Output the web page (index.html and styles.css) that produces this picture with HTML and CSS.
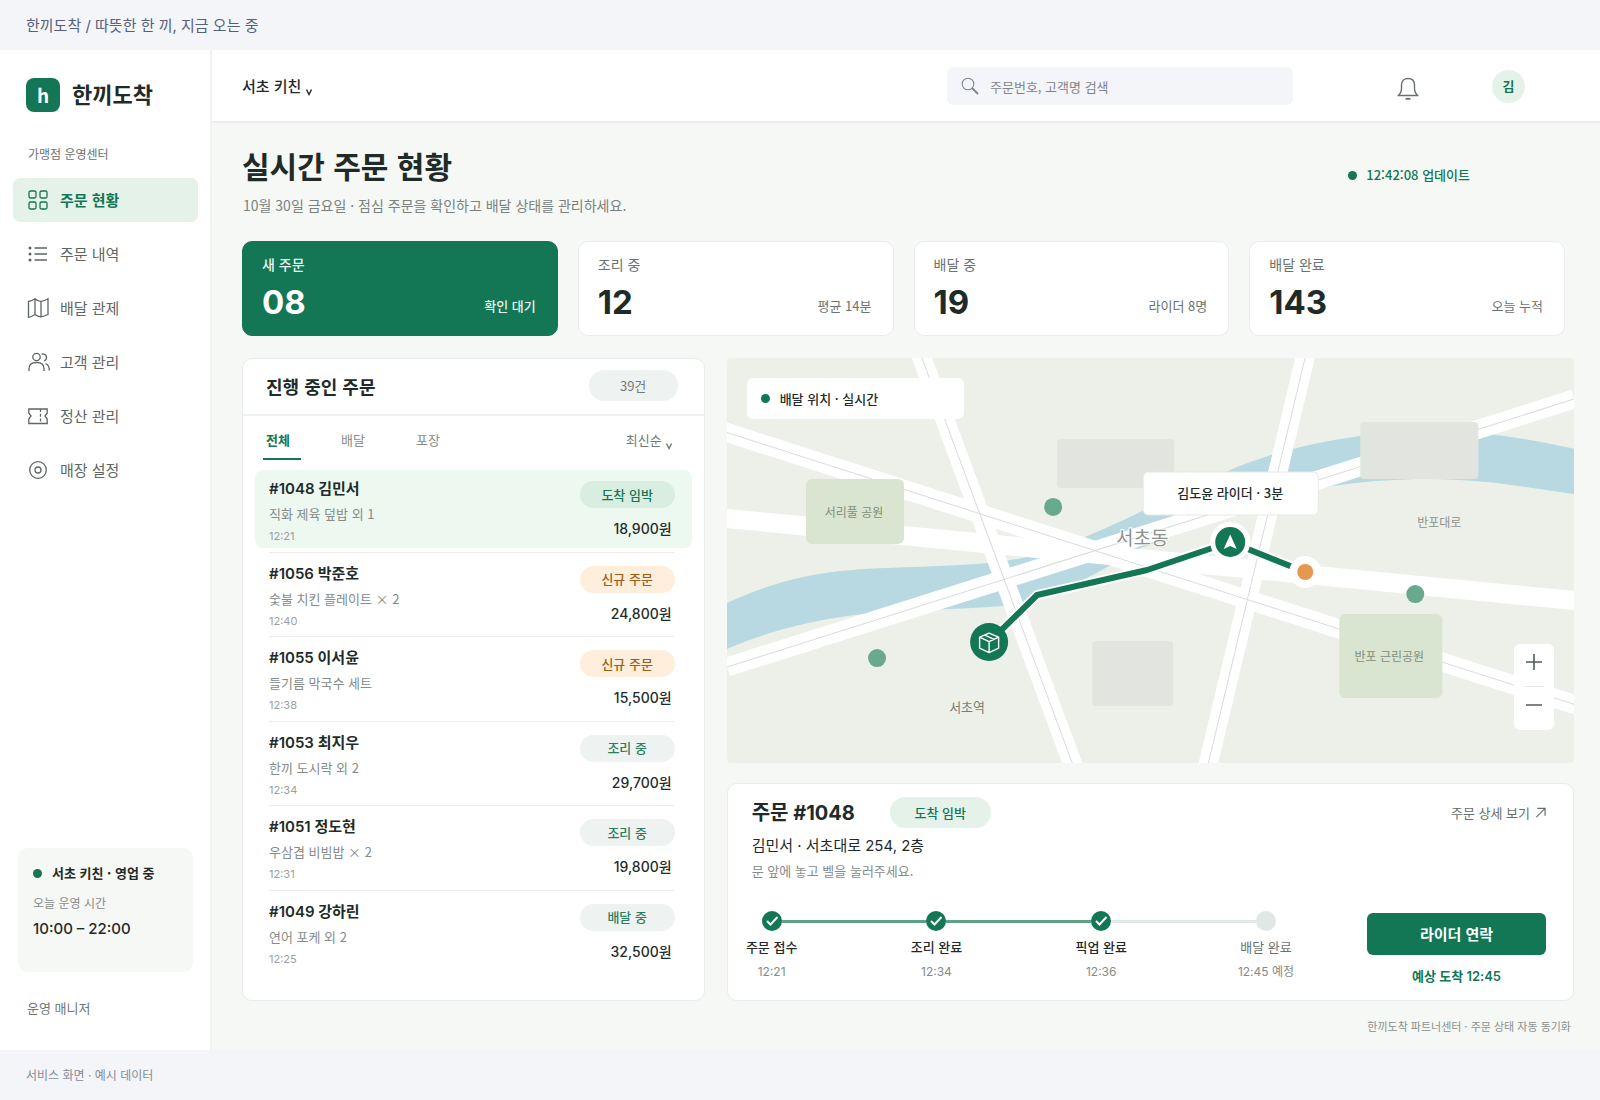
FILE: index.html
```html
<!DOCTYPE html>
<html lang="ko">
<head>
<meta charset="utf-8">
<meta name="viewport" content="width=device-width, initial-scale=1">
<title>한끼도착</title>
<link rel="stylesheet" href="styles.css">
</head>
<body>
<div class="strip strip-top">한끼도착 / 따뜻한 한 끼, 지금 오는 중</div>
<div class="shell">
  <aside class="sidebar">
    <div class="brand"><span class="brand-mark">h</span><span class="brand-name">한끼도착</span></div>
    <p class="side-label">가맹점 운영센터</p>
    <nav class="nav">
      <a class="nav-item is-active" href="#">
        <svg class="icon" viewBox="0 0 20 20"><rect x="1" y="1" width="7" height="7" rx="1.5"/><rect x="12" y="1" width="7" height="7" rx="1.5"/><rect x="1" y="12" width="7" height="7" rx="1.5"/><rect x="12" y="12" width="7" height="7" rx="1.5"/></svg>주문 현황</a>
      <a class="nav-item" href="#">
        <svg class="icon" viewBox="0 0 20 20"><path d="M6.500 4H19M6.500 10H19M6.500 16H19"/><g fill="currentColor" stroke="none"><circle cx="2" cy="4" r="1.500"/><circle cx="2" cy="10" r="1.500"/><circle cx="2" cy="16" r="1.500"/></g></svg>주문 내역</a>
      <a class="nav-item" href="#">
        <svg class="icon" viewBox="0 0 20 20"><path d="M0.500 3.500Q4 3 7 0.800Q10 3.500 13 3.300Q16.500 3 20 0.800V16.500Q16 18.500 13 18.800Q10 19 7 16.500Q4 18.500 0.500 19.500ZM7 0.800V16.500M13 3.300V18.800"/></svg>배달 관제</a>
      <a class="nav-item" href="#">
        <svg class="icon icon-wide" viewBox="0 0 22 20"><circle cx="8.500" cy="5" r="3.700"/><path d="M1 19V16.500C1 12.500 4 10.500 8.500 10.500S16 12.500 16 16.500V19M13.500 1.800C16 1.800 18.500 3 18.500 5.500C18.500 7.500 17.500 8.500 16 9M17.500 11.500C20 12.500 21.300 15 21.300 18.500"/></svg>고객 관리</a>
      <a class="nav-item" href="#">
        <svg class="icon" viewBox="0 0 20 20"><path d="M0.800 3H19.200V7L17 10L19.200 13V17.500H0.800V13L3 10L0.800 7Z"/><path d="M12.500 3V17.500" stroke-dasharray="3 1.800"/></svg>정산 관리</a>
      <a class="nav-item" href="#">
        <svg class="icon" viewBox="0 0 20 20"><circle cx="10" cy="10" r="8.300"/><circle cx="10" cy="10" r="3"/></svg>매장 설정</a>
    </nav>
    <section class="store">
      <h2 class="store-name"><span class="dot"></span>서초 키친 · 영업 중</h2>
      <p class="store-label">오늘 운영 시간</p>
      <p class="store-hours">10:00 – 22:00</p>
    </section>
    <p class="role">운영 매니저</p>
  </aside>

  <div class="main">
    <header class="topbar">
      <button class="branch" type="button">서초 키친<svg class="caret" viewBox="0 0 8 8"><path d="M1.500 1.500L4 6.500L6.500 1.500"/></svg></button>
      <label class="search">
        <svg class="search-icon" viewBox="0 0 18 18"><circle cx="7" cy="7" r="5.800"/><path d="M11 11L17 17" stroke-width="1.800"/></svg>
        <input type="search" placeholder="주문번호, 고객명 검색" aria-label="주문 검색">
      </label>
      <button class="bell" type="button" aria-label="알림"><svg viewBox="0 0 22 24"><path d="M1.500 18.500C3.500 16.500 4.500 15 4.500 12V8C4.500 4 7 1.500 11 1.500S17.500 4 17.500 8V12C17.500 15 18.500 16.500 20.500 18.500Z"/><path d="M8.500 21.800H13.500" stroke-width="1.800"/></svg></button>
      <button class="avatar" type="button">김</button>
    </header>

    <main class="content">
      <div class="page-head">
        <div>
          <h1>실시간 주문 현황</h1>
          <p class="page-sub">10월 30일 금요일 · 점심 주문을 확인하고 배달 상태를 관리하세요.</p>
        </div>
        <p class="updated"><span class="dot"></span>12:42:08 업데이트</p>
      </div>

      <section class="stats">
        <article class="stat is-primary"><h2>새 주문</h2><div class="stat-row"><strong>08</strong><span>확인 대기</span></div></article>
        <article class="stat"><h2>조리 중</h2><div class="stat-row"><strong>12</strong><span>평균 14분</span></div></article>
        <article class="stat"><h2>배달 중</h2><div class="stat-row"><strong>19</strong><span>라이더 8명</span></div></article>
        <article class="stat"><h2>배달 완료</h2><div class="stat-row"><strong>143</strong><span>오늘 누적</span></div></article>
      </section>

      <div class="board">
        <section class="card orders">
          <div class="orders-head"><h2>진행 중인 주문</h2><span class="pill pill-count">39건</span></div>
          <div class="tabs">
            <button class="tab is-active" type="button">전체</button>
            <button class="tab" type="button">배달</button>
            <button class="tab" type="button">포장</button>
            <button class="sort" type="button">최신순<svg class="caret" viewBox="0 0 8 8"><path d="M1.500 1.500L4 6.500L6.500 1.500"/></svg></button>
          </div>
          <ul class="order-list">
            <li><div class="order is-selected"><div class="order-info"><h3>#1048 김민서</h3><p>직화 제육 덮밥 외 1</p><time>12:21</time></div><div class="order-side"><span class="pill pill-arriving">도착 임박</span><strong>18,900원</strong></div></div></li>
            <li><div class="order"><div class="order-info"><h3>#1056 박준호</h3><p>숯불 치킨 플레이트 × 2</p><time>12:40</time></div><div class="order-side"><span class="pill pill-new">신규 주문</span><strong>24,800원</strong></div></div></li>
            <li><div class="order"><div class="order-info"><h3>#1055 이서윤</h3><p>들기름 막국수 세트</p><time>12:38</time></div><div class="order-side"><span class="pill pill-new">신규 주문</span><strong>15,500원</strong></div></div></li>
            <li><div class="order"><div class="order-info"><h3>#1053 최지우</h3><p>한끼 도시락 외 2</p><time>12:34</time></div><div class="order-side"><span class="pill">조리 중</span><strong>29,700원</strong></div></div></li>
            <li><div class="order"><div class="order-info"><h3>#1051 정도현</h3><p>우삼겹 비빔밥 × 2</p><time>12:31</time></div><div class="order-side"><span class="pill">조리 중</span><strong>19,800원</strong></div></div></li>
            <li><div class="order"><div class="order-info"><h3>#1049 강하린</h3><p>연어 포케 외 2</p><time>12:25</time></div><div class="order-side"><span class="pill">배달 중</span><strong>32,500원</strong></div></div></li>
          </ul>
        </section>

        <div class="right">
          <section class="map">
            <svg class="map-canvas" viewBox="0 0 847 405" preserveAspectRatio="xMidYMid slice">
              <path class="river" d="M0 245C50 222 93 212 160 210C210 208 260 208 300 199C370 180 430 143 503 112C560 88 620 77 690 73C740 71 800 80 847 91V136C800 130 760 121 700 121C640 121 590 130 545 138C490 152 450 180 413 190C370 215 330 240 276 248C230 252 180 251 136 256C90 261 40 273 0 291Z"/>
              <g class="road"><path d="M0 309L847 41"/><path d="M193 -5L347 410"/><path d="M-5 73L852 348"/><path d="M579 -5L480 410"/></g>
              <path class="road road-main" d="M-5 160L852 243"/>
              <g class="road-line"><path d="M0 309L847 41"/><path d="M193 -5L347 410"/><path d="M-5 73L852 348"/><path d="M579 -5L480 410"/></g>
              <g class="block"><rect x="330" y="81" width="117" height="49" rx="4"/><rect x="633" y="64" width="118" height="57" rx="4"/><rect x="365" y="283" width="81" height="65" rx="4"/></g>
              <g class="park"><rect x="79" y="121" width="98" height="65" rx="6"/><rect x="612" y="256" width="103" height="84" rx="6"/></g>
              <g class="spot"><circle cx="326" cy="149" r="9"/><circle cx="150" cy="300" r="9"/><circle cx="688" cy="236" r="9"/></g>
              <path class="route-halo" d="M262 284L310 237L420 212L503 184L578 214"/>
              <path class="route" d="M262 284L310 237L420 212L503 184L578 214"/>
              <circle class="pin" cx="262" cy="284" r="19"/>
              <path class="pin-icon" d="M262 275L271.500 279V290L262 294.500L252.500 290V279ZM252.500 279L262 283.500L271.500 279M262 283.500V294.500M257.500 277L267 281.300"/>
              <circle class="pin-ring" cx="503" cy="184" r="20"/>
              <circle class="pin" cx="503" cy="184" r="15"/>
              <path class="pin-arrow" d="M503 176.500L509.500 191L503 188L496.500 191Z"/>
              <circle class="pin-ring" cx="578" cy="214" r="16"/>
              <circle class="pin-dest" cx="578" cy="214" r="8"/>
              <rect class="callout" x="416" y="114" width="175" height="43" rx="5"/>
              <text class="callout-text" x="503" y="140">김도윤 라이더 · 3분</text>
              <g class="place"><text class="on-park" x="127" y="159">서리풀 공원</text><text class="on-park" x="662" y="303">반포 근린공원</text><text x="712" y="169">반포대로</text><text class="station" x="240" y="354">서초역</text></g>
              <text class="district" x="415" y="187">서초동</text>
            </svg>
            <p class="map-label"><span class="dot"></span>배달 위치 · 실시간</p>
            <div class="zoom">
              <button type="button" aria-label="확대"><svg viewBox="0 0 18 18"><path d="M1 9H17M9 1V17"/></svg></button>
              <button type="button" aria-label="축소"><svg viewBox="0 0 18 18"><path d="M1 9H17"/></svg></button>
            </div>
          </section>

          <section class="card detail">
            <div class="detail-head">
              <h2>주문 #1048</h2><span class="pill pill-status">도착 임박</span>
              <a class="detail-link" href="#">주문 상세 보기<svg viewBox="0 0 12 12"><path d="M1.500 11L11 1.500M2.500 1.500H11V9.500"/></svg></a>
            </div>
            <p class="address">김민서 · 서초대로 254, 2층</p>
            <p class="memo">문 앞에 놓고 벨을 눌러주세요.</p>
            <div class="detail-foot">
              <ol class="steps">
                <li class="step"><div class="step-track"><span class="step-dot"><svg viewBox="0 0 20 20"><path d="M5 10L8.500 13.500L15.500 6"/></svg></span><span class="step-bar"></span></div><b>주문 접수</b><time>12:21</time></li>
                <li class="step"><div class="step-track"><span class="step-dot"><svg viewBox="0 0 20 20"><path d="M5 10L8.500 13.500L15.500 6"/></svg></span><span class="step-bar"></span></div><b>조리 완료</b><time>12:34</time></li>
                <li class="step is-current"><div class="step-track"><span class="step-dot"><svg viewBox="0 0 20 20"><path d="M5 10L8.500 13.500L15.500 6"/></svg></span><span class="step-bar"></span></div><b>픽업 완료</b><time>12:36</time></li>
                <li class="step is-pending"><div class="step-track"><span class="step-dot"></span></div><b>배달 완료</b><time>12:45 예정</time></li>
              </ol>
              <div class="contact"><button type="button">라이더 연락</button><p>예상 도착 12:45</p></div>
            </div>
          </section>
        </div>
      </div>
      <footer class="content-foot">한끼도착 파트너센터 · 주문 상태 자동 동기화</footer>
    </main>
  </div>
</div>
<div class="strip strip-bottom">서비스 화면 · 예시 데이터</div>
</body>
</html>
```
FILE: styles.css
```css
:root {
  --green: #137654;
  --ink: #1f2b28;
  --text: #5e6663;
  --muted: #858b89;
  --line: #e8ecea;
  --mint: #e5f2ea;
  --korean: "Noto Sans CJK KR", sans-serif;
  --figures: Inter, "Noto Sans CJK KR", sans-serif;
}

* { box-sizing: border-box; margin: 0; padding: 0; }

body {
  display: flex;
  flex-direction: column;
  min-height: 100vh;
  background: #f5f8f5;
  color: var(--ink);
  font-family: var(--korean);
  font-size: 13px;
  line-height: 20px;
}

/* Text made mostly of figures */
.strip, .store-hours, .stat-row strong, .order-info h3, time, .order-side strong,
.detail-head h2, .address, .contact p { font-family: var(--figures); }

button, input { font: inherit; color: inherit; border: 0; background: none; }
button { cursor: pointer; }
a { color: inherit; text-decoration: none; }
ul, ol { list-style: none; }
svg { display: block; fill: none; stroke: currentColor; }

.strip { display: flex; align-items: center; min-height: 50px; padding: 1px 26px 0; background: #f3f5f9; }
.strip-top { color: #56607a; font-size: 15px; }
.strip-bottom { color: #858b98; font-size: 12px; }

.shell { flex: 1; display: grid; grid-template-columns: 212px minmax(0, 1fr); }

/* Sidebar */
.sidebar { display: flex; flex-direction: column; padding: 28px 13px 32px; background: #fff; border-right: 2px solid #eff2f0; }
.brand { display: flex; align-items: center; gap: 12px; padding-left: 13px; }
.brand-mark { display: grid; place-items: center; width: 34px; height: 34px; border-radius: 8px; background: var(--green); color: #fff; font-size: 19px; font-weight: 700; }
.brand-name { padding-bottom: 4px; font-size: 22px; font-weight: 700; line-height: 30px; }
.side-label { margin: 32px 0 14px 15px; color: #6b7370; font-size: 12px; }
.nav { display: grid; gap: 10px; }
.nav-item { display: flex; align-items: center; gap: 12px; min-height: 44px; padding: 0 15px; margin-right: -1px; border-radius: 7px; color: var(--text); font-size: 15px; }
.nav-item.is-active { background: var(--mint); color: var(--green); font-weight: 700; }
.icon { width: 20px; height: 20px; stroke-width: 1.3; overflow: visible; }
.icon-wide { width: 22px; margin-right: -2px; }
.store { min-height: 124px; margin: auto 4px 0 5px; padding: 15px; border-radius: 10px; background: #f5f8f5; }
.store-name { display: flex; align-items: center; gap: 10px; font-size: 13px; font-weight: 700; }
.store-label { margin-top: 10px; color: var(--muted); font-size: 12px; }
.store-hours { margin-top: 6px; font-size: 15px; font-weight: 500; }
.role { margin: 26px 0 0 14px; color: #6f7774; }
.dot { flex: none; width: 9px; height: 9px; border-radius: 50%; background: var(--green); }

/* Top bar */
.main { display: flex; flex-direction: column; }
.topbar { display: flex; align-items: center; min-height: 73px; padding: 1px 75px 0 30px; background: #fff; border-bottom: 2px solid #eaedeb; }
.branch { display: flex; align-items: center; gap: 4px; font-size: 15px; font-weight: 500; }
.caret { width: 8px; height: 8px; margin-top: 11px; stroke-width: 1.4; }
.search { display: flex; align-items: center; gap: 11px; width: 346px; margin-left: auto; padding: 0 14px; border-radius: 6px; background: #f4f5f8; color: #7f858e; }
.search-icon { flex: none; width: 18px; height: 18px; stroke-width: 1.1; }
.search input { flex: 1; min-width: 0; height: 38px; font-size: 13px; outline: 0; }
.search input::placeholder { color: #7f858e; opacity: 1; }
.bell { margin: 5px 73px 0 104px; color: #6a716f; }
.bell svg { width: 22px; height: 24px; stroke-width: 1.4; }
.avatar { width: 33px; height: 33px; border-radius: 50%; background: var(--mint); color: var(--green); font-weight: 700; }

/* Page */
.content { flex: 1; display: flex; flex-direction: column; padding: 20px 26px 14px 30px; }
.page-head { display: flex; justify-content: space-between; padding: 0 104px 0 0; }
h1 { font-size: 30px; font-weight: 700; line-height: 44px; }
.page-sub { margin: 8px 0 0 1px; color: #7a817f; font-size: 14px; }
.updated { display: flex; align-items: center; align-self: start; gap: 9px; margin-top: 22px; color: var(--green); font-weight: 500; }

.stats { display: grid; grid-template-columns: repeat(4, minmax(0, 1fr)); gap: 20px; margin: 26px 9px 22px 0; }
.stat { padding: 12px 21px 11px 19px; border: 1px solid var(--line); border-radius: 10px; background: #fff; color: #6b7370; }
.stat h2 { font-size: 14px; font-weight: 400; line-height: 20px; }
.stat-row { display: flex; align-items: end; justify-content: space-between; margin-top: 6px; }
.stat-row strong { color: var(--ink); font-size: 33px; font-weight: 700; line-height: 44px; }
.stat-row span { padding-bottom: 8px; }
.stat.is-primary { border-color: var(--green); background: var(--green); color: #e6f4ed; }
.stat.is-primary h2, .stat.is-primary span { font-weight: 500; }
.stat.is-primary strong { color: #fff; }

.board { flex: 1; display: grid; grid-template-columns: 463fr 848fr; gap: 22px; }
.card { border: 1px solid var(--line); border-radius: 10px; background: #fff; }
.pill { display: flex; align-items: center; justify-content: center; min-width: 95px; min-height: 27px; border-radius: 16px; background: #eef2f0; color: #2c7d61; font-weight: 500; }
.pill-count { min-width: 89px; min-height: 31px; color: #747c79; font-weight: 400; }
.pill-arriving { background: #d9eee1; color: var(--green); }
.pill-new { background: #feeedb; color: #9c5f17; }
.pill-status { min-width: 101px; min-height: 31px; background: var(--mint); color: var(--green); }

/* Orders */
.orders { display: flex; flex-direction: column; padding-bottom: 25px; }
.orders-head { display: flex; align-items: center; justify-content: space-between; padding: 11px 26px 13px 23px; border-bottom: 2px solid #eff1f0; }
.orders-head h2 { font-size: 18px; font-weight: 700; }
.tabs { display: flex; align-items: start; gap: 37px; padding: 8px 31px 8px 20px; }
.tab { width: 38px; padding: 6px 3px 8px; border-bottom: 2px solid transparent; color: var(--muted); text-align: left; white-space: nowrap; }
.tab.is-active { border-color: var(--green); color: var(--green); font-weight: 700; }
.sort { display: flex; align-items: center; gap: 3px; margin-left: auto; padding-top: 6px; color: #727a77; }
.order-list { flex: 1; display: grid; grid-auto-rows: 1fr; margin: 0 12px; }
.order-list li { display: flex; flex-direction: column; padding-top: 2px; }
.order-list li:not(:last-child)::after { content: ""; height: 1px; margin: 4px 18px 0 14px; background: #eceeed; }
.order-list li:last-child { padding-bottom: 5px; }
.order { flex: 1; display: flex; justify-content: space-between; padding: 9px 17px 0 14px; border-radius: 8px; }
.order.is-selected { background: #edf8f1; }
.order-info h3 { font-size: 15px; font-weight: 600; line-height: 20px; }
.order-info p { margin-top: 6px; color: var(--muted); line-height: 18px; }
.order-info time { display: block; margin-top: 5px; color: #9a9f9d; font-size: 11px; line-height: 16px; }
.order-side { display: flex; flex-direction: column; align-items: end; padding-top: 2px; }
.order-side strong { margin: 11px 3px 0 0; font-size: 14px; font-weight: 500; }

/* Map */
.right { display: flex; flex-direction: column; gap: 20px; min-width: 0; }
.map { position: relative; flex: 1; min-height: 320px; border-radius: 4px; overflow: hidden; background: #edf0e9; }
.map-canvas { position: absolute; inset: 0; width: 100%; height: 100%; stroke: none; }
.river { fill: #b8d9e1; }
.road { stroke: #fff; stroke-width: 19; }
.road-line { stroke: #d9dbd9; stroke-width: 1; }
.block { fill: #e2e5df; }
.park { fill: #d9e5d0; }
.spot { fill: #69a98c; }
.route-halo { stroke: #fff; stroke-width: 10; stroke-linejoin: round; }
.route { stroke: var(--green); stroke-width: 6; stroke-linejoin: round; }
.pin { fill: var(--green); }
.pin-ring, .pin-arrow { fill: #fff; }
.pin-dest { fill: #e79850; }
.pin-icon { stroke: #fff; stroke-width: 1.4; stroke-linejoin: round; }
.callout { fill: #fff; stroke: #e6e9e4; }
.callout-text { fill: var(--ink); font-size: 13px; font-weight: 500; text-anchor: middle; }
.place { fill: #8d928b; font-size: 12px; text-anchor: middle; }
.on-park { fill: #7f8d7b; }
.station { fill: #777d77; font-size: 13px; }
.district { fill: #8d928b; stroke: #fff; stroke-width: 2; paint-order: stroke; font-size: 19px; text-anchor: middle; }
.map-label { position: absolute; top: 20px; left: 20px; display: flex; align-items: center; gap: 10px; width: 217px; min-height: 41px; padding: 0 14px; border-radius: 6px; background: #fff; font-weight: 500; }
.zoom { position: absolute; right: 20px; bottom: 33px; width: 40px; padding: 0 10px 2px; border-radius: 6px; background: #fff; color: #535b58; }
.zoom button { display: grid; place-items: center; width: 20px; height: 42px; padding-bottom: 6px; }
.zoom button + button { border-top: 1px solid #e9ebea; }
.zoom svg { width: 18px; height: 18px; stroke-width: 1.6; }

/* Order detail */
.detail { padding: 13px 27px 14px 24px; }
.detail-head { display: flex; align-items: center; }
.detail-head h2 { font-size: 20px; font-weight: 700; line-height: 28px; }
.detail-head .pill { margin-left: 35px; }
.detail-link { display: flex; align-items: center; gap: 5px; margin-left: auto; color: #666e6b; }
.detail-link svg { width: 11px; height: 11px; stroke-width: 1.3; }
.address { margin-top: 8px; font-size: 15px; }
.memo { margin-top: 5px; color: var(--muted); }
.detail-foot { display: flex; gap: 71px; margin-top: 30px; }
.steps { flex: 1; display: flex; margin-left: -10px; }
.step { flex: 1; }
.step:last-child { flex: none; width: 60px; }
.step-track { display: flex; align-items: center; padding-left: 20px; }
.step-dot { flex: none; width: 20px; height: 20px; border-radius: 50%; background: var(--green); color: #fff; }
.step-dot svg { width: 20px; height: 20px; stroke-width: 2; }
.step-bar { flex: 1; height: 3px; margin-right: -20px; background: #5ea286; }
.step b, .step time { display: block; width: 60px; text-align: center; white-space: nowrap; }
.step b { margin-top: 6px; font-weight: 500; }
.step time { margin-top: 5px; color: var(--muted); font-size: 12px; }
.step.is-current .step-bar, .step.is-pending .step-dot { background: #e0e7e4; }
.step.is-pending b { color: #6b7370; font-weight: 400; }
.contact { width: 179px; padding-top: 2px; text-align: center; }
.contact button { width: 100%; min-height: 42px; border-radius: 6px; background: var(--green); color: #fff; font-size: 15px; font-weight: 700; }
.contact p { margin-top: 11px; color: var(--green); font-weight: 600; }

.content-foot { margin: 15px 3px 0 0; color: #8a908e; font-size: 11px; text-align: right; }
```
